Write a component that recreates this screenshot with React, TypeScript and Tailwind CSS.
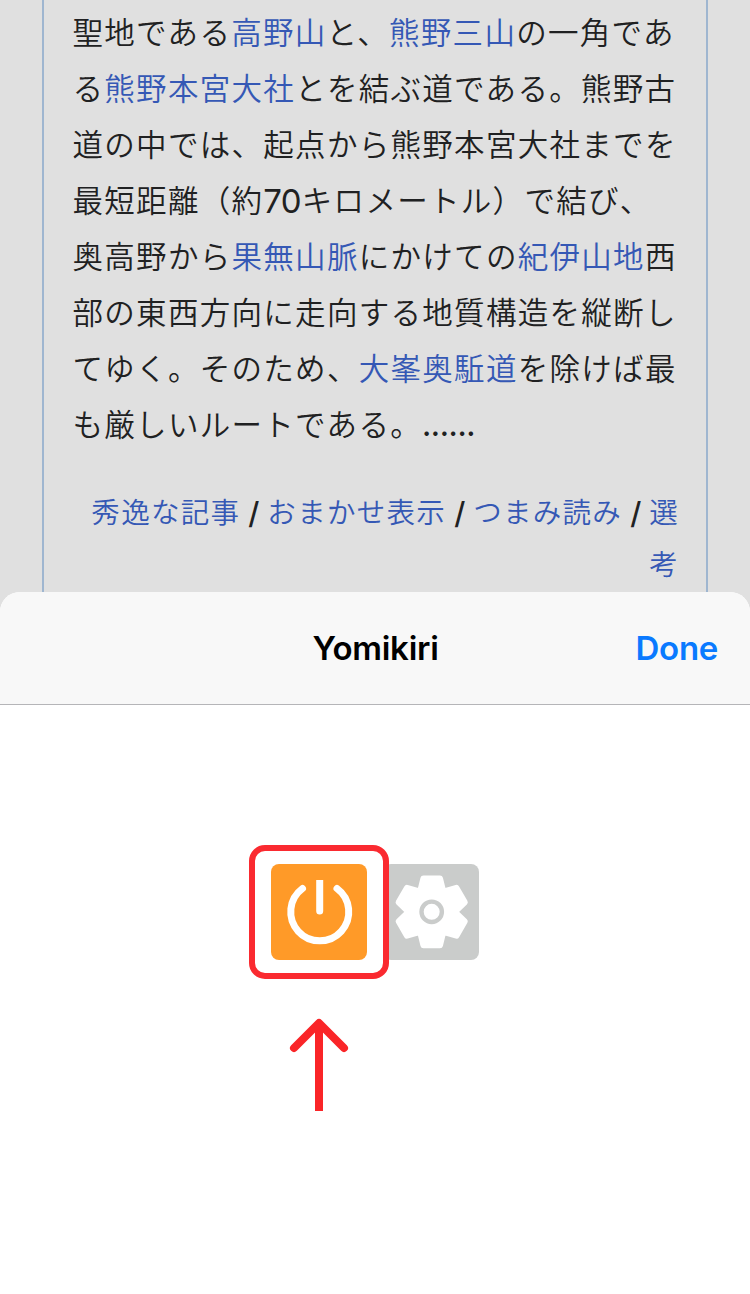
import type { ReactNode } from "react";

const Link = ({ children }: { children: ReactNode }) => (
  <span className="text-[#3558b5]">{children}</span>
);

const Line = ({ children }: { children: ReactNode }) => (
  <div className="h-14 whitespace-nowrap leading-[56px]">{children}</div>
);

const Article = () => (
  <div className="h-[592px] pl-[42px]">
    <article className="h-[612px] w-[666px] border-x-2 border-[#9fb6d0] pt-[5px] font-['Inter','Noto_Sans_CJK_JP',sans-serif] text-[#202122]">
      <div className="pl-[28.5px] text-[30.5px] font-[350] tracking-[1.3px]">
        <Line>聖地である<Link>高野山</Link>と、<Link>熊野三山</Link>の一角であ</Line>
        <Line>る<Link>熊野本宮大社</Link>とを結ぶ道である。熊野古</Line>
        <Line>道の中では、起点から熊野本宮大社までを</Line>
        <Line>最短距離（約<span className="inline-block h-14 w-[38.5px] align-top text-[33px] font-normal tracking-[-0.7px]">70</span>キロメートル）で結び、</Line>
        <Line>奥高野から<Link>果無山脈</Link>にかけての<Link>紀伊山地</Link>西</Line>
        <Line>部の東西方向に走向する地質構造を縦断し</Line>
        <Line>てゆく。そのため、<Link>大峯奥駈道</Link>を除けば最</Line>
        <Line>も厳しいルートである。<span className="font-medium tracking-[-0.4px]">......</span></Line>
      </div>
      <div className="mt-[34px] flex flex-col items-end pr-[27px] text-[28.5px] font-[350] leading-[52px] tracking-[1.3px]">
        <div className="flex whitespace-nowrap">
          <Link>秀逸な記事</Link>
          <Slash />
          <Link>おまかせ表示</Link>
          <Slash />
          <Link>つまみ読み</Link>
          <Slash />
          <Link>選</Link>
        </div>
        <Link>考</Link>
      </div>
    </article>
  </div>
);

const Slash = () => (
  <span className="w-[27px] text-center text-[30px] font-medium tracking-normal">/</span>
);

const PowerIcon = () => (
  <svg viewBox="0 0 96 96" className="size-24" fill="none" stroke="white" strokeWidth="7">
    <path d="M31.5 24.5A29 29 0 1 0 66 24.5" strokeLinecap="round" />
    <path d="M45.2 16h7v31a3.5 3.5 0 0 1-7 0z" fill="white" stroke="none" />
  </svg>
);

const gearTooth = [
  [-11.6, -20.1],
  [-8.3, -33.4],
  [8.3, -33.4],
];

const gearPoints = [0, 60, 120, 180, 240, 300]
  .flatMap((deg) => {
    const a = (deg * Math.PI) / 180;
    return gearTooth.map(
      ([x, y]) =>
        `${(48.7 + x * Math.cos(a) - y * Math.sin(a)).toFixed(2)},${(47.8 + x * Math.sin(a) + y * Math.cos(a)).toFixed(2)}`,
    );
  })
  .join(" ");

const GearIcon = () => (
  <svg viewBox="0 0 96 96" className="size-24">
    <polygon points={gearPoints} fill="white" stroke="white" strokeWidth="6" strokeLinejoin="round" />
    <circle cx="48.7" cy="47.8" r="10.2" fill="white" stroke="#cacccb" strokeWidth="4.4" />
  </svg>
);

export default function App() {
  return (
    <div className="h-[1294px] w-[750px] overflow-hidden bg-[#e0e0e0]">
      <Article />
      <section className="relative h-[702px] overflow-hidden rounded-t-[20px] bg-white">
        <header className="grid h-[113px] grid-cols-3 items-center border-b border-[#b5b5b8] bg-[#f8f8f8] px-8 pt-[2px] font-['Inter',sans-serif] text-[33px]">
          <span />
          <h1 className="pl-px text-center font-semibold tracking-[-0.25px] text-black">Yomikiri</h1>
          <button className="text-right font-semibold tracking-[-0.3px] text-[#0a7aff]">Done</button>
        </header>
        <div className="flex justify-center gap-4 pt-[159px]">
          <div className="relative z-10">
            <button className="block size-24 rounded-lg bg-[#ff9a28]"><PowerIcon /></button>
            <div className="absolute -left-[22px] -top-[19px] h-[134px] w-[140px] rounded-[16px] border-[6px] border-[#fa2a30]" />
            <svg viewBox="0 0 60 94" className="absolute left-[18px] top-[153px] h-[94px] w-[60px]" fill="none" stroke="#fa2528">
              <path d="M30 6v88" strokeWidth="8" />
              <path d="M5 31L30 6l25 25" strokeWidth="8" strokeLinecap="round" strokeLinejoin="round" />
            </svg>
          </div>
          <button className="block size-24 rounded-lg bg-[#cacccb]"><GearIcon /></button>
        </div>
      </section>
    </div>
  );
}
